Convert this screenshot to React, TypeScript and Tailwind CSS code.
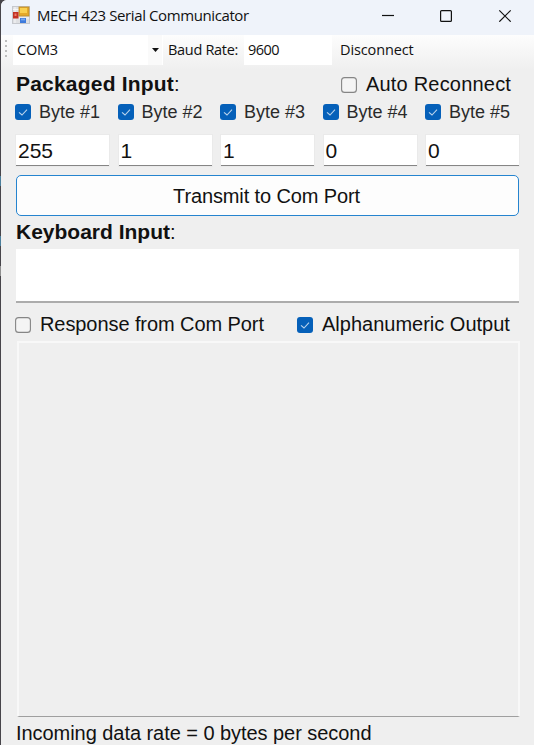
import React from 'react';

function CheckBox({ checked = false }: { checked?: boolean }) {
  return (
    <svg width="16" height="16" viewBox="0 0 16 16" className="block shrink-0">
      {checked ? (
        <>
          <rect width="16" height="16" rx="3" fill="#0560b9" />
          <path d="M4 8.3 L7 11 L12 5.6" fill="none" stroke="#b9d3ec" strokeWidth="1.1" />
        </>
      ) : (
        <rect x="0.6" y="0.6" width="14.8" height="14.8" rx="3" fill="#f4f4f4" stroke="#858585" strokeWidth="1.1" />
      )}
    </svg>
  );
}

const bytes = [
  { label: 'Byte #1', value: '255' },
  { label: 'Byte #2', value: '1' },
  { label: 'Byte #3', value: '1' },
  { label: 'Byte #4', value: '0' },
  { label: 'Byte #5', value: '0' },
];

function AppIcon() {
  return (
    <svg width="18" height="18" viewBox="0 0 18 18" className="block shrink-0">
      <rect x="0.5" y="0.5" width="17" height="17" fill="#dfe0e3" stroke="#c6c8cd" />
      <path d="M1 3.5H7M3 1V17M7 12H17M13 12V17" stroke="#f6f6f6" />
      <rect x="7" y="1" width="10" height="9" fill="#e5a92a" stroke="#b98b28" strokeWidth="0.8" />
      <rect x="8" y="2" width="7" height="5" fill="#f9d050" />
      <rect x="1" y="6" width="5.5" height="6.5" fill="#c33122" />
      <rect x="2.5" y="7.5" width="2" height="2.5" fill="#e8796a" />
      <rect x="8" y="12" width="6" height="5" fill="#3f7bdc" />
      <rect x="9" y="12.6" width="4" height="1.8" fill="#74a7f1" />
    </svg>
  );
}

export default function App() {
  return (
    <div className="flex h-[745px] w-[534px] overflow-hidden bg-[#47454a] font-['Liberation_Sans',Arial,sans-serif] text-[20px] text-[#111]">
      <div className="flex w-px shrink-0 flex-col">
        <div className="h-[176px] bg-[#47454a]" />
        <div className="h-[10px] bg-[#4b7f9c]" />
        <div className="h-[50px] bg-[#47454a]" />
        <div className="h-[10px] bg-[#4b7f9c]" />
        <div className="h-[20px] bg-[#47454a]" />
        <div className="h-[10px] bg-[#8f8f8f]" />
      </div>
      <div className="flex w-[533px] flex-col overflow-hidden rounded-tl-[6px] bg-[#efefef]">
        <header className="flex h-[35px] shrink-0 items-center bg-[#eff3fa] pl-[11px] pb-[5px] font-['Open_Sans','Noto_Sans',sans-serif]">
          <AppIcon />
          <h1 className="ml-[7px] w-[345px] whitespace-nowrap text-[15px] leading-[20px] tracking-[-0.4px]">MECH 423 Serial Communicator</h1>
          <svg width="130" height="14" viewBox="0 0 130 14" className="block" fill="none" stroke="#111" strokeWidth="1.2">
            <path d="M0 7.5H12" />
            <rect x="58.6" y="2.6" width="10.8" height="10.8" rx="1" />
            <path d="M117.3 2.3L128.7 13.7M128.7 2.3L117.3 13.7" />
          </svg>
        </header>

        <div className="flex h-[35px] shrink-0 items-start bg-linear-to-b from-[#fdfdfd] to-[#efefef] font-['Open_Sans','Noto_Sans',sans-serif] text-[14.5px] leading-[30px] whitespace-nowrap">
          <div className="ml-[4px] mt-[5px] flex flex-col gap-[3px]">
            {[0, 1, 2, 3].map((n) => <i key={n} className="block size-[2px] bg-[#bdbdbd]" />)}
          </div>
          <div className="ml-[6px] flex h-[30px] w-[150px] bg-white pl-[4px]">
            <span className="w-[131px] tracking-[-0.2px]">COM3</span>
            <span className="flex w-[14px] items-center justify-center bg-[#fafafa]">
              <svg width="7" height="4" viewBox="0 0 7 4"><path d="M0 0H7L3.5 4Z" fill="#111" /></svg>
            </span>
          </div>
          <span className="ml-[5px] w-[76px] tracking-[-0.3px]">Baud Rate:</span>
          <span className="w-[88px] bg-white pl-[4px] tracking-[-0.5px]">9600</span>
          <span className="ml-[8px] tracking-[-0.12px]">Disconnect</span>
        </div>

        <main className="flex flex-col pl-[15px] whitespace-nowrap">
          <div className="flex h-[30px] items-center leading-[30px]">
            <h2 className="-mt-[2px] w-[325px]"><b className="text-[21px] tracking-[0.2px]">Packaged Input</b>:</h2>
            <CheckBox />
            <span className="-mt-[2px] ml-[9px] tracking-[0.2px]">Auto Reconnect</span>
          </div>
          <div className="-ml-px flex h-[24px] items-center text-[18px]">
            {bytes.map((b) => (
              <label key={b.label} className="flex w-[102.5px] shrink-0 items-center">
                <CheckBox checked />
                <span className="ml-[8px] text-[#2a2a2a] leading-[24px]">{b.label}</span>
              </label>
            ))}
          </div>
          <div className="mt-[11px] flex gap-[9.5px]">
            {bytes.map((b) => (
              <div key={b.label} className="h-[31px] w-[93px] border-b border-[#858585] bg-white pl-[2px] text-[21px] leading-[31px] shadow-[0_0_0_1px_#eaeaea]">
                {b.value}
              </div>
            ))}
          </div>
          <button className="mt-[9px] h-[41px] w-[503px] rounded-[5px] border border-[#2584cf] bg-[#fdfdfd] pr-[2px] leading-[38px] tracking-[-0.12px]">Transmit to Com Port</button>
          <h2 className="h-[33px] leading-[31px]"><b className="text-[21px]">Keyboard Input</b>:</h2>
          <div className="h-[54px] w-[503px] border-b-2 border-[#acacac] bg-white" />
          <div className="-ml-px flex h-[37px] items-center pt-[6px] leading-[31px]">
            <CheckBox />
            <span className="ml-[9px] w-[257px] tracking-[-0.08px]">Response from Com Port</span>
            <CheckBox checked />
            <span className="ml-[9px]">Alphanumeric Output</span>
          </div>
          <div className="ml-px mt-px h-[376px] w-[503px] border-2 border-b border-[#f8f8f8] border-b-[#9f9f9f] bg-[#efefef]" />
          <p className="mt-px h-[30px] leading-[30px] tracking-[-0.05px]">Incoming data rate = 0 bytes per second</p>
        </main>
      </div>
    </div>
  );
}
